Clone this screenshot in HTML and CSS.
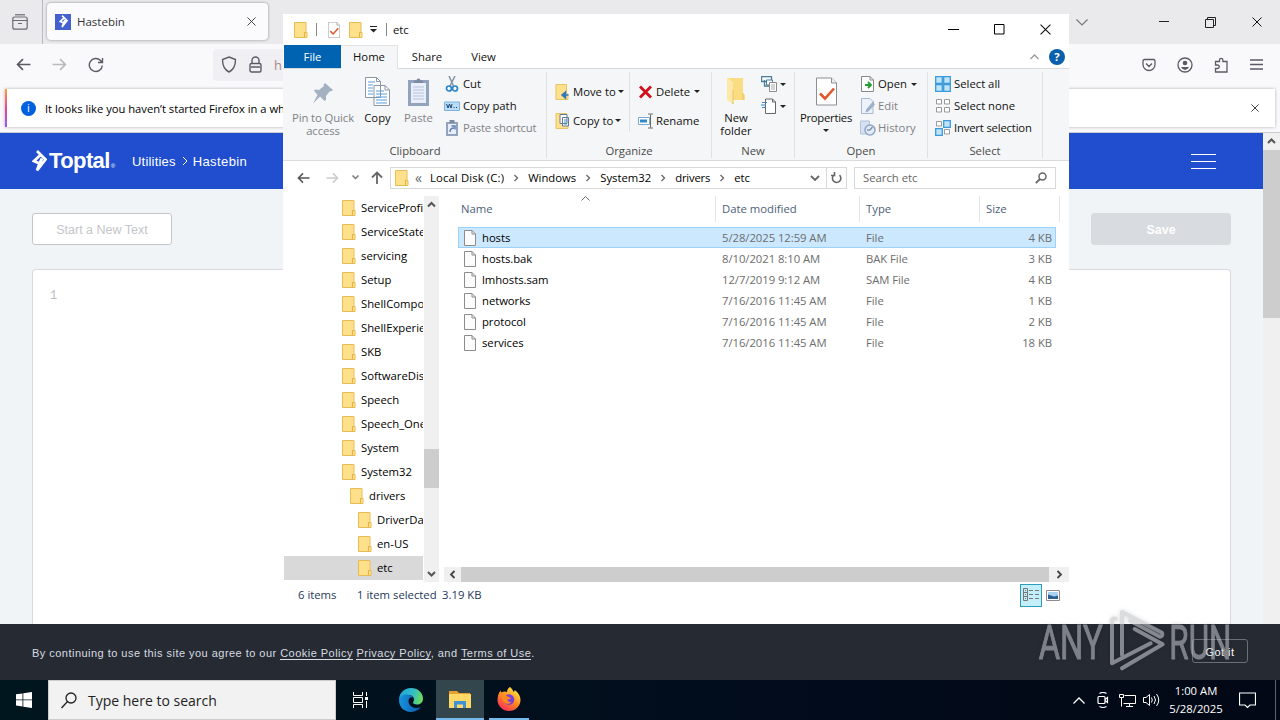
FILE: index.html
```html
<!DOCTYPE html>
<html lang="en">
<head>
    <meta charset="UTF-8">
    <title>Hastebin</title>
    <link rel="stylesheet" href="styles.css">
</head>
<body>
    <svg class="defs">
        <symbol id="folder" viewBox="0 0 14 16">
            <path d="M.5.5h11.500v10h1v5H.5z" fill="#ffe18b" stroke="#e8bd55"/>
            <path d="M10.500 15.500v-5h1.500" fill="none" stroke="#e3b23c"/>
        </symbol>
        <symbol id="file" viewBox="0 0 12 16">
            <path d="M.5.5h7.500l3.500 3.500v11.500H.5z" fill="#fcfcfc" stroke="#8c8c8c"/>
            <path d="M8 .5v3.500h3.500" fill="none" stroke="#8c8c8c"/>
        </symbol>
        <symbol id="doc-check" viewBox="0 0 21 28">
            <path d="M.5.5h15l5 5v22H.5z" fill="#fff" stroke="#8b8f94"/>
            <path d="M15.500.5v5h5" fill="#eee" stroke="#8b8f94"/>
            <path d="M4 16l5 5 9-10" fill="none" stroke="#e0572b" stroke-width="2.600"/>
        </symbol>
        <symbol id="chev" viewBox="0 0 8 8">
            <path d="M2.500 1l3 3-3 3" fill="none" stroke="#666" stroke-width="1.300"/>
        </symbol>
        <symbol id="arrow" viewBox="0 0 14 12">
            <path d="M13.500 6H1.500M6.500 1l-5 5 5 5" fill="none" stroke="currentColor" stroke-width="1.600"/>
        </symbol>
        <symbol id="cross" viewBox="0 0 10 10">
            <path d="M.5.5l9 9M9.500.5l-9 9" fill="none" stroke="currentColor"/>
        </symbol>
        <symbol id="toptal" viewBox="0 0 15 22">
            <path d="M5 1l8.500 8.500L5 20.500l2.500-7L2 11l7-6.500M7.500 13.500l2.500-5" fill="none" stroke="#fff" stroke-width="2.800"/>
        </symbol>
    </svg>

    <div class="browser">
        <div class="tabbar">
            <div class="history-btn">
                <svg width="16" height="16" viewBox="0 0 16 16" fill="none" stroke="#6b6b73" stroke-width="1.200"><path d="M3 .8h10"/><path d="M.8 6.500V5q0-2 2-2h10.400q2 0 2 2v1.500z"/><path d="M.8 6.500v6.700q0 2 2 2h10.400q2 0 2-2V6.500M6 9.500h4"/></svg>
            </div>
            <div class="tab">
                <span class="favicon"><svg width="9" height="13"><use href="#toptal"/></svg></span>
                <span class="tab-title">Hastebin</span>
                <svg class="tab-close" width="9" height="9"><use href="#cross"/></svg>
            </div>
            <div class="win-btns">
                <svg width="12" height="7" viewBox="0 0 12 7"><path d="M.5.5L6 6l5.500-5.500" fill="none" stroke="#777" stroke-width="1.200"/></svg>
                <svg width="10" height="10"><path d="M0 4.500h10" stroke="#222"/></svg>
                <svg width="11" height="11" viewBox="0 0 11 11" fill="none" stroke="#222"><path d="M.5 2.500h8v8h-8zM2.500 2.500v-2h8v8h-2"/></svg>
                <svg width="10" height="10"><use href="#cross"/></svg>
            </div>
        </div>
        <div class="toolbar">
            <svg class="ic-back" width="15" height="13"><use href="#arrow"/></svg>
            <svg class="ic-fwd" width="15" height="13"><use href="#arrow"/></svg>
            <svg class="ic-reload" width="16" height="16" viewBox="0 0 16 16" fill="none" stroke="#5b5b66" stroke-width="1.400"><path d="M14.300 8.500A6.500 6.500 0 1 1 12.500 3.500L14 5M14.500 1v4.500H10"/></svg>
            <div class="urlbar">
                <svg width="16" height="17" viewBox="0 0 16 17" fill="none" stroke="#5b5b66" stroke-width="1.400"><path d="M8 1l6.500 2.500C14.500 9 13 13.500 8 16 3 13.500 1.500 9 1.500 3.500z"/></svg>
                <svg width="13" height="17" viewBox="0 0 13 17" fill="none" stroke="#5b5b66" stroke-width="1.400"><rect x="1" y="7.500" width="11" height="8.500" rx="1.500"/><path d="M3 7.500V4.500a3.500 3.500 0 0 1 7 0v3M2 11h9"/></svg>
                <span>h</span>
            </div>
            <div class="tool-icons">
                <svg width="14" height="14" viewBox="0 0 14 14" fill="none" stroke="#5b5b66" stroke-width="1.300"><path d="M2.500 1.500h9q1.500 0 1.500 1.500v3.500a6 6 0 0 1-12 0V3q0-1.500 1.500-1.500zM4 5.500l3 3 3-3"/></svg>
                <svg width="16" height="16" viewBox="0 0 16 16" fill="none" stroke="#5b5b66" stroke-width="1.300"><circle cx="8" cy="8" r="7"/><circle cx="8" cy="6" r="2.300" fill="#5b5b66" stroke="none"/><path d="M4 10h8q-1.500 3-4 3t-4-3z" fill="#5b5b66" stroke="none"/></svg>
                <svg width="15" height="16" viewBox="0 0 15 16" fill="none" stroke="#5b5b66" stroke-width="1.300"><path d="M1.500 15V11.500h2a1.700 1.700 0 0 0 0-3.500h-2V4.500h4V3a1.700 1.700 0 0 1 3.400 0v1.500H13V15z"/></svg>
                <svg width="13" height="11" stroke="#5b5b66" stroke-width="1.300"><path d="M0 1h13M0 5.500h13M0 10h13"/></svg>
            </div>
        </div>
        <div class="notice-row">
            <div class="notice">
                <span class="info">i</span>
                <span class="notice-text">It looks like you haven’t started Firefox in a while.</span>
                <svg width="8" height="8" viewBox="0 0 10 10"><use href="#cross"/></svg>
            </div>
        </div>
        <div class="page">
            <div class="page-main">
                <header class="site-header">
                    <svg class="logo-mark" width="15" height="22"><use href="#toptal"/></svg>
                    <span class="logo-text">Toptal<small>®</small></span>
                    <span class="crumb">Utilities</span>
                    <svg width="6" height="10" viewBox="0 0 6 10"><path d="M1 1l4 4-4 4" fill="none" stroke="#fff"/></svg>
                    <span class="crumb crumb-last">Hastebin</span>
                    <span class="burger"></span>
                </header>
                <div class="actions">
                    <span class="btn">Start a New Text</span>
                    <span class="btn btn-save">Save</span>
                </div>
                <div class="editor">1</div>
            </div>
            <div class="page-scroll">
                <svg width="17" height="17" viewBox="0 0 17 17"><path d="M5 10l3.500-3.500L12 10" fill="none" stroke="#555" stroke-width="2"/></svg>
                <div class="page-thumb"></div>
            </div>
        </div>
        <div class="cookie">
            <p>By continuing to use this site you agree to our <a>Cookie Policy</a> <a>Privacy Policy</a>, and <a>Terms of Use</a>.</p>
            <span class="got-it">Got it</span>
        </div>
    </div>

    <div class="explorer">
        <div class="titlebar">
            <svg width="14" height="16"><use href="#folder"/></svg>
            <i class="tb-sep"></i>
            <svg class="tb-check" width="12" height="16"><use href="#doc-check"/></svg>
            <svg width="14" height="16"><use href="#folder"/></svg>
            <svg class="tb-drop" width="7" height="7"><path d="M0 .5h7" stroke="#222"/><path d="M0 3h7L3.500 6.500z" fill="#222"/></svg>
            <i class="tb-sep"></i>
            <span class="tb-title">etc</span>
            <div class="ex-btns">
                <svg width="11" height="11"><path d="M0 5.500h11" stroke="#000"/></svg>
                <svg width="11" height="11"><path d="M.5.5h9.500v9.500H.5z" fill="none" stroke="#000"/></svg>
                <svg width="11" height="11"><use href="#cross"/></svg>
            </div>
        </div>
        <div class="menu">
            <span class="menu-file">File</span>
            <span class="menu-home">Home</span>
            <span class="menu-share">Share</span>
            <span class="menu-view">View</span>
            <div class="menu-right">
                <svg width="9" height="6"><path d="M.5 5l4-4 4 4" fill="none" stroke="#999" stroke-width="1.300"/></svg>
                <b class="help">?</b>
            </div>
        </div>

        <div class="ribbon">
            <div class="group clipboard">
                <div class="group-body">
                    <div class="big pin off">
                        <svg width="22" height="22" viewBox="0 0 22 22"><path d="M13 1l8 7-2 1.500-1-.5-4 5v4l-1.500 1L8 14.500 1 21.500 5.500 13 2 8.500 3 7.500l4 .5 5-4-.5-1.500z" fill="#a4b1c3"/></svg>
                        <span>Pin to Quick<br>access</span>
                    </div>
                    <div class="big copy">
                        <svg width="25" height="29" viewBox="0 0 25 29" fill="#fff" stroke="#8a97a8"><path d="M.5.500h11l4 4v16H.5zM9 8.500h11l4.500 4.500v15.500H9z"/><path d="M11.500.5v4h4M20 8.500V13h4.500" fill="none"/><path d="M3 5h7M3 8h5M3 11h5M3 14h5M3 17h5M11 14h8M11 17h11M11 20h11M11 23h11M11 26h11" stroke="#5a9fdc"/></svg>
                        <span>Copy</span>
                    </div>
                    <div class="big paste off">
                        <svg width="21" height="29" viewBox="0 0 21 29"><path d="M0 3h21v26H0z" fill="#93a3bd"/><path d="M3 6h15v20H3z" fill="#e9eefa"/><path d="M6 6V3.500h2.500a2 2 0 0 1 4 0H15V6z" fill="#7c8aa2"/><path d="M5 10h11M5 13h11M5 16h11M5 19h11M5 22h11" stroke="#b7c3dc"/></svg>
                        <span>Paste</span>
                    </div>
                    <div class="smalls">
                        <div class="small cut"><svg width="16" height="16" viewBox="0 0 16 16" fill="none"><path d="M5 0l4.500 10M11 0L6 10" stroke="#8793a3" stroke-width="1.500"/><circle cx="5" cy="12.500" r="2.500" stroke="#2a86c8" stroke-width="1.700"/><circle cx="11" cy="12.500" r="2.500" stroke="#2a86c8" stroke-width="1.700"/></svg><span>Cut</span></div>
                        <div class="small copypath"><svg width="16" height="16" viewBox="0 0 16 16"><path d="M.5 4h15v8.500H.5z" fill="#b9ddf8" stroke="#7bb2e0"/><path d="M2.500 6l1.500 4 1.500-4L7 10l1-4M9.500 9.500h1M12 9.500h1" stroke="#1c4468" fill="none"/></svg><span>Copy path</span></div>
                        <div class="small off pshort"><svg width="16" height="16" viewBox="0 0 16 16"><path d="M2 2h12v14H2z" fill="#93a3bd"/><path d="M4 4h8v10H4z" fill="#e9eefa"/><path d="M5.500 0h5v3h-5z" fill="#7c8aa2"/><path d="M6 12c0-3 1-4 4-4M7.500 6H11v3.500" stroke="#5f7fb5" stroke-width="1.500" fill="none"/></svg><span>Paste shortcut</span></div>
                    </div>
                </div>
                <div class="group-name">Clipboard</div>
            </div>

            <div class="group organize">
                <div class="group-body">
                    <div class="smalls two">
                        <div class="small move"><svg width="16" height="16" viewBox="0 0 16 16"><path d="M1 .5h10.500V10h1.500v5.500H1z" fill="#ffe18b" stroke="#e8c365"/><path d="M13.500 11H8M10.500 8L7 11l3.500 3z" fill="#2f78bd" stroke="#2f78bd" stroke-width="1.500"/></svg><span>Move to</span><i class="drop"></i></div>
                        <div class="small copyto"><svg width="16" height="16" viewBox="0 0 16 16"><path d="M1 .5h10.500V10h1.500v5.500H1z" fill="#ffe18b" stroke="#e8c365"/><path d="M5 1.500h7v9H5zM7.500 4.500h6v8.500h-6z" fill="#fff" stroke="#607b9c"/><path d="M9 7h3M9 9h3M9 11h3" stroke="#4d91d1"/></svg><span>Copy to</span><i class="drop"></i></div>
                    </div>
                    <div class="smalls two org-right">
                        <div class="small delete"><svg width="16" height="16" viewBox="0 0 16 16"><path d="M2 2.500l11 11M13 2.500l-11 11" stroke="#d0111b" stroke-width="2.800"/></svg><span>Delete</span><i class="drop"></i></div>
                        <div class="small rename"><svg width="16" height="16" viewBox="0 0 16 16"><path d="M.5 4.500h11v7H.5z" fill="#fff" stroke="#7ba9cf"/><path d="M2 6.500h7v3H2z" fill="#3588c8"/><path d="M12.500 1.500v13M10 1h2.500l2.500 0M10 15h5" stroke="#666"/></svg><span>Rename</span></div>
                    </div>
                </div>
                <div class="group-name">Organize</div>
            </div>

            <div class="group new">
                <div class="group-body">
                    <div class="big newfolder">
                        <svg width="20" height="28" viewBox="0 0 20 28"><path d="M1 1h16v15l2 2v5H1z" fill="#fadc82"/><path d="M1 1l6 4v22l-6-4z" fill="#ffe9a8"/><path d="M7 13V27l-1-1" stroke="#ecc660" fill="none"/><path d="M17 16v7" stroke="#ecc660"/></svg>
                        <span>New<br>folder</span>
                    </div>
                    <div class="smalls">
                        <div class="small"><svg width="16" height="16" viewBox="0 0 16 16"><path d="M.5.5h10v5H.5zM3.500 4v6H8" fill="none" stroke="#4b7f9e" stroke-width="1.300"/><path d="M5.500 4h6v5h-6z" fill="#fff" stroke="#4b7f9e"/><path d="M8.500 6.500h7v9h-7z" fill="#fff" stroke="#8a8a8a"/><path d="M10 9h4M10 11h4M10 13h4" stroke="#aaa"/></svg><i class="drop"></i></div>
                        <div class="small"><svg width="16" height="16" viewBox="0 0 16 16"><path d="M4.500 1h7l3 3v11.500h-10z" fill="#fff" stroke="#666"/><path d="M11.500 1v3h3" fill="none" stroke="#666"/><path d="M1 4.500h5M0 7h5M1 9.500h3" stroke="#3d8bc8" stroke-width="1.200"/></svg><i class="drop"></i></div>
                    </div>
                </div>
                <div class="group-name">New</div>
            </div>

            <div class="group open">
                <div class="group-body">
                    <div class="big props">
                        <svg width="21" height="29"><use href="#doc-check"/></svg>
                        <span>Properties</span>
                        <i class="drop"></i>
                    </div>
                    <div class="smalls">
                        <div class="small openitem"><svg width="16" height="16" viewBox="0 0 16 16"><path d="M1.500.5h8.500l3.500 3.500v11.500h-12z" fill="#fff" stroke="#8a8a8a"/><path d="M10 .5v3.500h3.500" fill="none" stroke="#8a8a8a"/><path d="M5 9h5M8 6l3 3-3 3" stroke="#239c32" stroke-width="1.800" fill="none"/></svg><span>Open</span><i class="drop"></i></div>
                        <div class="small off edit"><svg width="16" height="16" viewBox="0 0 16 16"><path d="M1.500.5h8.500l3 3v12H1.500z" fill="#eef2fa" stroke="#a9b8d0"/><path d="M13.500 3.500L7 11l-1 3 3-1.500 5.500-6" fill="#9db0cc" stroke="#9db0cc"/></svg><span>Edit</span></div>
                        <div class="small off hist"><svg width="16" height="16" viewBox="0 0 16 16"><path d="M.5 1h9v13h-9z" fill="#d6e0f0" stroke="#b3c2da"/><circle cx="10" cy="10" r="5" fill="#e3eaf6" stroke="#91a5c6" stroke-width="1.500"/><path d="M10 10l2.500-3M10 10H7" stroke="#7f94b8" stroke-width="1.500"/></svg><span>History</span></div>
                    </div>
                </div>
                <div class="group-name">Open</div>
            </div>

            <div class="group select">
                <div class="group-body">
                    <div class="smalls">
                        <div class="small selall"><svg width="16" height="16" viewBox="0 0 16 16" fill="#bfe3fb" stroke="#3a9ad9" stroke-width="1.300"><path d="M.7.7h6.600v6.600H.7zM8.700.7h6.600v6.600H8.700zM.7 8.700h6.600v6.600H.7zM8.700 8.700h6.600v6.600H8.700z"/></svg><span>Select all</span></div>
                        <div class="small selnone"><svg width="16" height="16" viewBox="0 0 16 16" fill="#fff" stroke="#9a9a9a"><path d="M1.500 1.500h5v4.500h-5zM9.500 1.500h5v4.500h-5zM1.500 9.500h5v4.500h-5zM9.500 9.500h5v4.500h-5z"/></svg><span>Select none</span></div>
                        <div class="small inv"><svg width="16" height="16" viewBox="0 0 16 16"><path d="M1.500 1.500h5v4.500h-5zM9.500 9.500h5v4.500h-5z" fill="#fff" stroke="#9a9a9a"/><path d="M8.700.7h6.600v6.600H8.700zM.7 8.700h6.600v6.600H.7z" fill="#bfe3fb" stroke="#3a9ad9" stroke-width="1.300"/></svg><span>Invert selection</span></div>
                    </div>
                </div>
                <div class="group-name">Select</div>
            </div>
        </div>

        <div class="address-row">
            <svg class="nav-back" width="13" height="12"><use href="#arrow"/></svg>
            <svg class="nav-fwd" width="13" height="12"><use href="#arrow"/></svg>
            <svg class="nav-drop" width="7" height="5"><path d="M.5.5l3 3 3-3" fill="none" stroke="#777" stroke-width="1.500"/></svg>
            <svg class="nav-up" width="12" height="13"><path d="M6 13V1.500M1 6.500l5-5 5 5" fill="none" stroke="#666" stroke-width="1.800"/></svg>
            <div class="address">
                <svg width="14" height="16"><use href="#folder"/></svg>
                <span class="ell">«</span>
                <span class="a1">Local Disk (C:)</span><svg width="8" height="8"><use href="#chev"/></svg>
                <span class="a2">Windows</span><svg width="8" height="8"><use href="#chev"/></svg>
                <span class="a3">System32</span><svg width="8" height="8"><use href="#chev"/></svg>
                <span class="a4">drivers</span><svg width="8" height="8"><use href="#chev"/></svg>
                <span class="a5">etc</span>
                <svg class="addr-drop" width="10" height="6"><path d="M1 1l4 4 4-4" fill="none" stroke="#666" stroke-width="1.800"/></svg>
                <span class="refresh"><svg width="11" height="12" viewBox="0 0 11 12"><path d="M8.500 3.200A4.200 4.200 0 1 1 3 3M3.500 0v3.500H0" fill="none" stroke="#666" stroke-width="1.600"/></svg></span>
            </div>
            <div class="search">
                <span>Search etc</span>
                <svg width="12" height="12" viewBox="0 0 12 12"><circle cx="7.500" cy="4.500" r="3.500" fill="none" stroke="#666" stroke-width="1.500"/><path d="M5 7L.8 11.200" stroke="#666" stroke-width="1.800"/></svg>
            </div>
        </div>

        <div class="content">
            <ul class="tree">
                <li><svg width="14" height="16"><use href="#folder"/></svg><span>ServiceProfiles</span></li>
                <li><svg width="14" height="16"><use href="#folder"/></svg><span>ServiceState</span></li>
                <li><svg width="14" height="16"><use href="#folder"/></svg><span>servicing</span></li>
                <li><svg width="14" height="16"><use href="#folder"/></svg><span>Setup</span></li>
                <li><svg width="14" height="16"><use href="#folder"/></svg><span>ShellComponents</span></li>
                <li><svg width="14" height="16"><use href="#folder"/></svg><span>ShellExperiences</span></li>
                <li><svg width="14" height="16"><use href="#folder"/></svg><span>SKB</span></li>
                <li><svg width="14" height="16"><use href="#folder"/></svg><span>SoftwareDistribution</span></li>
                <li><svg width="14" height="16"><use href="#folder"/></svg><span>Speech</span></li>
                <li><svg width="14" height="16"><use href="#folder"/></svg><span>Speech_OneCore</span></li>
                <li><svg width="14" height="16"><use href="#folder"/></svg><span>System</span></li>
                <li><svg width="14" height="16"><use href="#folder"/></svg><span>System32</span></li>
                <li class="lv1"><svg width="14" height="16"><use href="#folder"/></svg><span>drivers</span></li>
                <li class="lv2"><svg width="14" height="16"><use href="#folder"/></svg><span>DriverData</span></li>
                <li class="lv2"><svg width="14" height="16"><use href="#folder"/></svg><span>en-US</span></li>
                <li class="lv2 current"><svg width="14" height="16"><use href="#folder"/></svg><span>etc</span></li>
            </ul>
            <div class="tree-scroll">
                <svg width="15" height="17"><path d="M4 10.500L7.500 7l3.500 3.500" fill="none" stroke="#555" stroke-width="2"/></svg>
                <div class="tree-thumb"></div>
                <svg width="15" height="17"><path d="M4 7l3.500 3.500L11 7" fill="none" stroke="#555" stroke-width="2"/></svg>
            </div>
            <div class="files">
                <div class="file-head">
                    <span class="h-name">Name<svg class="sort" width="9" height="5"><path d="M.5 4.500l4-4 4 4" fill="none" stroke="#666"/></svg></span>
                    <span class="h-date">Date modified</span>
                    <span class="h-type">Type</span>
                    <span class="h-size">Size</span>
                </div>
                <div class="file selected"><svg width="12" height="16"><use href="#file"/></svg><b>hosts</b><span>5/28/2025 12:59 AM</span><span>File</span><span class="size">4 KB</span></div>
                <div class="file"><svg width="12" height="16"><use href="#file"/></svg><b>hosts.bak</b><span>8/10/2021 8:10 AM</span><span>BAK File</span><span class="size">3 KB</span></div>
                <div class="file"><svg width="12" height="16"><use href="#file"/></svg><b>lmhosts.sam</b><span>12/7/2019 9:12 AM</span><span>SAM File</span><span class="size">4 KB</span></div>
                <div class="file"><svg width="12" height="16"><use href="#file"/></svg><b>networks</b><span>7/16/2016 11:45 AM</span><span>File</span><span class="size">1 KB</span></div>
                <div class="file"><svg width="12" height="16"><use href="#file"/></svg><b>protocol</b><span>7/16/2016 11:45 AM</span><span>File</span><span class="size">2 KB</span></div>
                <div class="file"><svg width="12" height="16"><use href="#file"/></svg><b>services</b><span>7/16/2016 11:45 AM</span><span>File</span><span class="size">18 KB</span></div>
                <div class="hscroll">
                    <svg width="17" height="15"><path d="M10.500 4L7 7.500l3.500 3.500" fill="none" stroke="#444" stroke-width="1.800"/></svg>
                    <div class="hthumb"></div>
                    <svg width="20" height="15"><path d="M8.500 4L12 7.500 8.500 11" fill="none" stroke="#444" stroke-width="1.800"/></svg>
                </div>
            </div>
        </div>
        <div class="status">
            <span class="st-items">6 items</span>
            <span class="st-sel">1 item selected</span>
            <span class="st-size">3.19 KB</span>
            <div class="views">
                <span class="view-on"><svg width="16" height="14" fill="none" stroke="#777"><path d="M.5.500h4v12h-4zM.5 4.500h4M.5 8.500h4M2 2.500h1M2 6.500h1M2 10.500h1M6 2.500h4M6 6.500h4M6 10.500h4M12 2.500h4M12 6.500h4M12 10.500h4"/></svg></span>
                <svg width="14" height="11" viewBox="0 0 14 11"><path d="M.5.5h13v10H.5z" fill="#fff" stroke="#8f8a94"/><path d="M2 2h10v7H2z" fill="#a8d3f2"/><path d="M2 4.500l6 2 4-1V9H2z" fill="#2b5f96"/></svg>
            </div>
        </div>
    </div>

    <div class="taskbar">
        <div class="start"><svg width="16" height="16" viewBox="0 0 16 16" fill="#fff"><path d="M0 2.300l6.500-.9v6.100H0zM7.300 1.300L16 0v7.500H7.300zM0 8.300h6.500v6.200L0 13.600zM7.300 8.300H16V16l-8.700-1.300z"/></svg></div>
        <div class="tsearch">
            <svg width="16" height="17" viewBox="0 0 16 17" fill="none" stroke="#222" stroke-width="1.300"><circle cx="10" cy="6" r="5"/><path d="M6.500 9.500L.5 16"/></svg>
            <span>Type here to search</span>
        </div>
        <div class="task tview"><svg width="17" height="16" viewBox="0 0 17 16" fill="none" stroke="#fff"><path d="M1.500 0v3.500h9V0M1.500 16v-3.500h9V16M1.500 5.500h9v5h-9zM14.500 0v4M14.500 9v7"/><path d="M13 5h3v3h-3z" fill="#fff" stroke="none"/></svg></div>
        <div class="task">
            <svg width="24" height="24" viewBox="0 0 24 24">
                <defs>
                    <linearGradient id="edge-a" x1="0" x2="1" y1=".3" y2=".5"><stop offset="0" stop-color="#1ea5e0"/><stop offset=".6" stop-color="#35c1c0"/><stop offset="1" stop-color="#6fdc55"/></linearGradient>
                    <linearGradient id="edge-b" x1="0" x2="1"><stop offset="0" stop-color="#1794e0"/><stop offset="1" stop-color="#0d55a5"/></linearGradient>
                </defs>
                <path d="M0 12C0 5 5 0 12 0s12 5 12 10.500c0 4-3 6-6 6-2.500 0-4-1-4-2s1-1 1-3c0-2.500-2-4.500-5.500-4.500C5 7 1 9 0 12z" fill="url(#edge-a)"/>
                <path d="M0 12c1-4 4.500-6 8.500-5.500 3 .3 5 1.500 6 3-3-1-5 1-5 3.500 0 4 3.500 7 8 7 2 0 3.500-.6 4.500-1.200C20 22 16.500 24 12 24 5 24 0 19 0 12z" fill="url(#edge-b)"/>
            </svg>
        </div>
        <div class="task on">
            <svg width="22" height="19" viewBox="0 0 22 19"><path d="M0 1h8l2 2h11v5H0z" fill="#e8a02c"/><path d="M0 4h22v14H0z" fill="#ffd868"/><path d="M5 18v-7h12v7h-3v-3.500H8V18z" fill="#3d93d6"/></svg>
        </div>
        <div class="task run">
            <svg width="24" height="24" viewBox="0 0 24 24">
                <defs><linearGradient id="fox" x1=".8" x2=".2" y1="0" y2="1"><stop offset="0" stop-color="#fff04a"/><stop offset=".5" stop-color="#ff8b1f"/><stop offset="1" stop-color="#f5265e"/></linearGradient></defs>
                <path d="M13 0c2 2 3 3 3.500 5 1-.5 1.200-1.200 1.200-2 4 3 5.800 6 5.800 10A11.500 11 0 0 1 .5 13C.5 9 1.500 6 3.500 3.500c.2 1 .5 1.500 1 2C6 4.500 8 4 10 5c0-2 1-4 3-5z" fill="url(#fox)"/>
                <circle cx="12" cy="12.500" r="5.300" fill="#7b3fd6"/>
                <path d="M4 8c3-1 5 0 6.500 1.500L14 11c-1 1-2 1.500-3.500 1.500 0 2 2 3 4 2.500-2 2.500-6 2.500-8-.5-1.200-2-1.500-4-2.500-6.500z" fill="#ff8b1f"/>
            </svg>
        </div>
        <div class="tray">
            <svg class="t-up" width="12" height="7"><path d="M.5 6.500L6 1l5.500 5.500" fill="none" stroke="#fff" stroke-width="1.300"/></svg>
            <svg class="t-cam" width="12" height="16" viewBox="0 0 12 16" fill="none" stroke="#fff" stroke-width="1.200"><rect x="1" y="4.500" width="7" height="7" rx="1"/><path d="M8 7.500l2.500-2v5L8 8.500M2.500 1.500Q6-.5 9.500 1.500M2.500 14.500q3.500 2 7 0"/></svg>
            <svg class="t-net" width="17" height="15" viewBox="0 0 17 15" fill="none" stroke="#fff"><path d="M5.500 2.500h11v8H4.500M10.500 10.500v3M7 13.500h7M.5 1.500h4v3h-4zM2.500 4.500v9"/></svg>
            <svg class="t-vol" width="17" height="14" viewBox="0 0 17 14" fill="none" stroke="#fff"><path d="M.5 4.500h2.500L6.500 1.500v11L3 9.500H.5zM8.500 4.500q1.500 2.500 0 5M11 3q3 4 0 8M13.500 1q4.500 6 0 12"/></svg>
            <div class="clock"><span class="time">1:00 AM</span><span class="date">5/28/2025</span></div>
            <svg class="t-note" width="17" height="17" viewBox="0 0 17 17"><path d="M.5 1h16v12h-5.500L8.500 15.500 6 13H.5z" fill="none" stroke="#fff" stroke-width="1.200"/></svg>
        </div>
    </div>

    <svg class="watermark" width="200" height="70" viewBox="15 18 600 210">
        <text x="26" y="177" textLength="192" lengthAdjust="spacingAndGlyphs">ANY</text>
        <text x="418" y="177" textLength="186" lengthAdjust="spacingAndGlyphs">RUN</text>
        <path d="M257 56q-11-3-11 8v126l116-60M276 165V36l120 62q4 10-6 12L300 62M276 205l122-72-84-46"/>
    </svg>
</body>
</html>
```
FILE: styles.css
```css
* {
    box-sizing: border-box;
}

body {
    margin: 0;
    width: 1280px;
    height: 720px;
    overflow: hidden;
    position: relative;
    font: 11.3px/14px "Open Sans", "Noto Sans", sans-serif;
    color: #111;
}

svg {
    flex: none;
    display: block;
}

span {
    white-space: nowrap;
}

p {
    margin: 0;
}

.defs {
    position: absolute;
    width: 0;
    height: 0;
}

/* browser */
.browser {
    display: flex;
    flex-direction: column;
    height: 680px;
}

.tabbar {
    display: flex;
    height: 44px;
    background: #eaeaed;
}

.history-btn {
    width: 43px;
    padding: 14px 0 0 12px;
    border-right: 1px solid #b9b9be;
}

.tab {
    display: flex;
    align-items: center;
    width: 221px;
    height: 37px;
    margin: 3px 0 0 4px;
    padding: 0 12px 0 8px;
    border-radius: 4px;
    background: #fbfbfe;
    box-shadow: 0 0 3px rgba(0,0,0,0.4);
    color: #333;
}

.favicon {
    display: flex;
    align-items: center;
    justify-content: center;
    width: 16px;
    height: 16px;
    margin-right: 6px;
    background: #4560cf;
}

.tab-title {
    font-size: 11.500px;
}

.tab-close {
    margin-left: auto;
}

.win-btns {
    display: flex;
    align-items: center;
    gap: 36px;
    margin-left: auto;
    padding-right: 18px;
}

.win-btns svg:first-child {
    margin-right: 35px;
}

.toolbar {
    display: flex;
    align-items: center;
    height: 41px;
    padding-left: 16px;
    background: #f9f9fb;
    color: #5b5b66;
}

.ic-fwd {
    margin: 0 21px;
    color: #bbb;
    transform: scaleX(-1);
}

.urlbar {
    display: flex;
    align-items: center;
    gap: 12px;
    width: 700px;
    height: 32px;
    margin-left: 109px;
    padding-left: 8px;
    border-radius: 4px;
    background: #f0f0f4;
    font-size: 13px;
    color: #a88;
}

.tool-icons {
    display: flex;
    align-items: center;
    gap: 21px;
    margin-left: auto;
    padding-right: 17px;
}

.notice-row {
    height: 48px;
    padding: 4px 5px 0;
    background: #f9f9fb;
    border-bottom: 1px solid #ccc;
}

.notice {
    display: flex;
    align-items: center;
    height: 38px;
    padding: 0 16px 0 14px;
    border-left: 2px solid;
    border-image: linear-gradient(#ffa436, #e0489a 50%, #9059ff) 1;
    background: #fff;
    box-shadow: 0 0 3px rgba(0,0,0,0.3);
}

.info {
    width: 15px;
    height: 15px;
    margin-right: 9px;
    border-radius: 50%;
    background: #0060df;
    color: #fff;
    text-align: center;
}

.notice-text {
    margin-right: auto;
    padding-top: 1px;
    font-size: 11.2px;
    color: #000;
}

.page {
    display: flex;
    flex: 1;
    min-height: 0;
    background: #f1f4f7;
}

.page-main {
    display: flex;
    flex-direction: column;
    flex: 1;
}

.site-header {
    display: flex;
    align-items: center;
    height: 56px;
    padding-left: 32px;
    background: #204ecf;
    color: #fff;
    font: 13px "Liberation Sans", sans-serif;
}

.logo-text {
    width: 83px;
    margin-left: 2px;
    font-size: 22px;
    font-weight: bold;
    letter-spacing: -0.600px;
}

.logo-text small {
    margin-left: 1px;
    font-size: 6px;
    font-weight: normal;
}

.site-header .crumb {
    margin-right: 6px;
    letter-spacing: 0.2px;
}

.site-header .crumb-last {
    margin-left: 5px;
    letter-spacing: 0.4px;
}

.burger {
    width: 25px;
    height: 15px;
    margin-left: auto;
    margin-right: 47px;
    background: linear-gradient(#fff, #fff) 0 6px / 100% 1px no-repeat;
    border-top: 1px solid #fff;
    border-bottom: 1px solid #fff;
}

.actions {
    display: flex;
    justify-content: space-between;
    padding: 24px 32px;
}

.btn {
    width: 140px;
    height: 32px;
    border: 1px solid #c4c6ca;
    border-radius: 3px;
    background: #fff;
    color: #c4c6ca;
    font: 12.500px/32px "Liberation Sans", sans-serif;
    text-align: center;
}

.btn-save {
    border-color: #d8dbdf;
    background: #d8dbdf;
    color: #fff;
    font-weight: bold;
}

.editor {
    flex: 1;
    margin: 0 32px;
    padding: 19px 17px;
    border: 1px solid #d8dbdf;
    border-bottom: 0;
    border-radius: 4px 4px 0 0;
    background: #fff;
    color: #bbb;
    font-family: "Liberation Mono", monospace;
    font-size: 12px;
}

.page-scroll {
    width: 17px;
    background: #f0f0f0;
}

.page-thumb {
    height: 168px;
    background: #cdcdcd;
}

.cookie {
    display: flex;
    align-items: center;
    height: 56px;
    padding: 2px 32px 0;
    background: #262b33;
    color: #d8dbe0;
    font: 11px "Liberation Sans", sans-serif;
    letter-spacing: 0.470px;
}

.cookie a {
    border-bottom: 1px solid #d8dbe0;
}

.got-it {
    width: 56px;
    height: 24px;
    margin: 0 0 4px auto;
    border: 1px solid #6a6f78;
    border-radius: 3px;
    color: #fff;
    line-height: 24px;
    text-align: center;
}

/* explorer window */
.explorer {
    position: absolute;
    left: 283px;
    top: 14px;
    width: 786px;
    height: 596px;
    background: #fff;
}

.titlebar {
    display: flex;
    align-items: center;
    height: 31px;
    padding-left: 11px;
}

.tb-sep {
    width: 1px;
    height: 13px;
    margin: 0 11px 0 8px;
    background: #888;
}

.tb-check {
    margin-right: 9px;
}

.tb-drop {
    margin: 0 1px 0 7px;
}

.tb-drop + .tb-sep {
    margin-right: 6px;
}

.ex-btns {
    display: flex;
    gap: 35px;
    margin-left: auto;
    padding-right: 18px;
}

.menu {
    display: flex;
    height: 24px;
    border-bottom: 1px solid #d9dadb;
    line-height: 23px;
    text-align: center;
}

.menu-file {
    width: 57px;
    height: 23px;
    margin-left: 1px;
    background: #0063b1;
    color: #fff;
}

.menu-home {
    width: 57px;
    height: 24px;
    border: solid #e1e2e3;
    border-width: 1px 1px 0 0;
    background: #f5f6f7;
    line-height: 22px;
}

.menu-share {
    width: 58px;
}

.menu-view {
    width: 55px;
}

.menu-right {
    display: flex;
    align-items: center;
    gap: 10px;
    margin-left: auto;
    padding-right: 4px;
}

.help {
    width: 16px;
    height: 16px;
    border-radius: 50%;
    background: #0a5fae;
    color: #fff;
    line-height: 16px;
}

.ribbon {
    display: flex;
    height: 92px;
    padding: 3px 0 2px 1px;
    border-bottom: 1px solid #d9dadb;
    background: #f5f6f7;
}

.group {
    display: flex;
    flex-direction: column;
    border-right: 1px solid #e0e1e3;
}

.group-body {
    display: flex;
    flex: none;
    height: 70px;
}

.group-name {
    text-align: center;
    color: #4a4a4a;
    line-height: 18px;
}

.clipboard {
    width: 263px;
}

.organize {
    width: 165px;
}

.new {
    width: 83px;
}

.open {
    width: 133px;
}

.select {
    width: 115px;
}

.big {
    display: flex;
    flex-direction: column;
    align-items: center;
    padding-top: 5px;
    text-align: center;
    line-height: 13px;
}

.big svg {
    margin-bottom: 5px;
}

.off {
    color: #7f8287;
}

.pin {
    width: 78px;
    letter-spacing: -0.1px;
}

.pin svg {
    margin: 5px 0 7px;
}

.copy {
    width: 31px;
}

.paste {
    width: 51px;
}

.newfolder {
    width: 48px;
}

.newfolder svg {
    margin-bottom: 6px;
}

.props {
    width: 62px;
    letter-spacing: -0.250px;
}

.smalls {
    display: flex;
    flex-direction: column;
    padding-top: 1px;
}

.small {
    display: flex;
    align-items: center;
    flex: none;
    height: 22px;
}

.small span {
    margin-left: 3px;
}

.pshort,
.inv {
    letter-spacing: -0.180px;
}

.two {
    padding-top: 5px;
}

.two .small {
    height: 29px;
}

.organize .two {
    width: 85px;
    padding-left: 8px;
}

.organize .two span {
    margin-left: 2px;
}

.organize .org-right {
    height: 60px;
    padding-left: 8px;
    border-left: 1px solid #e0e1e3;
}

.new .smalls {
    margin-left: 1px;
}

.new .drop {
    margin-left: 3px;
}

.select .smalls {
    padding-left: 7px;
}

.open .smalls {
    padding-left: 3px;
}

.open .small span {
    margin-left: 2px;
}

.drop {
    border: 3.500px solid transparent;
    border-top-color: #222;
    border-bottom: 0;
    margin-left: 4px;
}

.organize .move .drop,
.organize .copyto .drop {
    margin-left: 2px;
}

.props .drop {
    margin: 5px 0 0;
}

.address-row {
    display: flex;
    align-items: center;
    height: 35px;
    padding: 0 0 2px 14px;
    color: #555;
}

.nav-fwd {
    margin-left: 16px;
    color: #ccc;
    transform: scaleX(-1);
}

.nav-drop {
    margin: 0 12px 0 13px;
}

.address {
    display: flex;
    align-items: center;
    width: 457px;
    height: 22px;
    margin-left: 7px;
    padding-left: 4px;
    border: 1px solid #d9d9d9;
    color: #000;
}

.ell {
    margin: 0 8px 0 6px;
    font-size: 14px;
    color: #666;
}

.address span + svg {
    margin: 0 8px;
}

.a1 {
    letter-spacing: 0.130px;
}

.a4 {
    letter-spacing: -0.2px;
}

.address .addr-drop {
    margin: 0 6px 0 auto;
}

.refresh {
    display: flex;
    align-items: center;
    width: 20px;
    height: 20px;
    padding-left: 4px;
    border-left: 1px solid #d9d9d9;
}

.search {
    display: flex;
    align-items: center;
    justify-content: space-between;
    width: 202px;
    height: 22px;
    margin-left: 7px;
    padding: 0 8px;
    border: 1px solid #d9d9d9;
    color: #666;
}

.content {
    display: flex;
    height: 386px;
}

.tree {
    width: 139px;
    margin: 0 1px;
    padding: 0;
    list-style: none;
    overflow: hidden;
    color: #000;
}

.tree li {
    display: flex;
    align-items: center;
    gap: 5px;
    height: 24px;
    padding-left: 58px;
}

.tree .lv1 {
    padding-left: 66px;
}

.tree .lv2 {
    padding-left: 74px;
}

.tree .current {
    background: #d9d9d9;
}

.tree-scroll {
    display: flex;
    flex-direction: column;
    width: 15px;
    background: #f0f0f0;
}

.tree-thumb {
    height: 39px;
    margin: 236px 0 auto;
    background: #cdcdcd;
}

.files {
    display: flex;
    flex-direction: column;
    width: 630px;
    padding-left: 5px;
}

.file-head {
    display: flex;
    height: 26px;
    margin: 0 0 5px 17px;
    color: #4c607a;
    line-height: 26px;
}

.file-head span {
    border-right: 1px solid #e5e5e5;
}

.h-name {
    position: relative;
    width: 255px;
}

.sort {
    position: absolute;
    left: 120px;
    top: 0;
}

.file-head .h-date {
    width: 144px;
    padding-left: 6px;
}

.file-head .h-type {
    width: 120px;
    padding-left: 6px;
}

.file-head .h-size {
    width: 80px;
    padding-left: 6px;
}

.file {
    display: grid;
    grid-template-columns: 18px 240px 144px 100px 1fr;
    align-items: center;
    width: 598px;
    height: 21px;
    margin-left: 14px;
    padding: 0 4px 0 6px;
    color: #6d6d6d;
    letter-spacing: -0.050px;
}

.file b {
    font-weight: normal;
    color: #000;
}

.file .size {
    text-align: right;
}

.selected {
    background: #cce8ff;
    box-shadow: inset 0 0 0 1px #99d1ff;
}

.hscroll {
    display: flex;
    height: 15px;
    margin-top: auto;
    background: #f0f0f0;
}

.hthumb {
    flex: 1;
    background: #cdcdcd;
}

.status {
    display: flex;
    align-items: center;
    height: 26px;
    padding-left: 15px;
    color: #1e395b;
}

.st-items {
    width: 59px;
}

.st-sel {
    width: 85px;
}

.views {
    display: flex;
    align-items: center;
    gap: 4px;
    margin-left: auto;
    padding-right: 9px;
}

.view-on {
    display: flex;
    align-items: center;
    justify-content: center;
    width: 22px;
    height: 23px;
    border: 1px solid #2f9bbb;
    background: #c5eefb;
}

/* taskbar */
.taskbar {
    display: flex;
    height: 40px;
    background: linear-gradient(90deg, #00161e, #020c1c 60%, #020815);
    color: #fff;
}

.start {
    width: 48px;
    padding: 12px 0 0 16px;
}

.tsearch {
    display: flex;
    align-items: center;
    gap: 11px;
    width: 288px;
    padding: 1px 0 0 12px;
    border: 1px solid #ccc;
    background: #f2f2f2;
    color: #222;
    font-size: 14px;
}

.task {
    display: flex;
    align-items: center;
    justify-content: center;
    width: 48px;
}

.task:nth-child(4) {
    margin-left: 4px;
}

.tview {
    margin-right: -1px;
}

.on {
    margin-left: 1px;
    background: #34464d;
    border-bottom: 2px solid #76b9ed;
}

.run {
    width: 40px;
    margin-left: 5px;
    border-bottom: 2px solid #76b9ed;
}

.tray {
    display: flex;
    align-items: center;
    width: 203px;
    margin-left: auto;
    margin-right: 4px;
    border-right: 1px solid #5b6470;
}

.t-cam {
    margin-left: 12px;
}

.t-net {
    margin-left: 10px;
}

.t-vol {
    margin-left: 7px;
}

.clock {
    display: flex;
    flex-direction: column;
    align-items: center;
    width: 72px;
    padding-bottom: 1px;
    line-height: 18px;
}

.t-note {
    margin-left: 7px;
}

.watermark {
    position: absolute;
    left: 1035px;
    top: 606px;
    opacity: 0.600;
    font: 146px Roboto, sans-serif;
    filter: drop-shadow(0 0 2px rgba(0,0,0,0.25));
}

.watermark text {
    fill: #b9bbc0;
    stroke: #b9bbc0;
    stroke-width: 3;
}

.watermark path {
    fill: none;
    stroke: #c3c5c9;
    stroke-width: 12;
    stroke-linejoin: round;
    stroke-linecap: round;
}
```
